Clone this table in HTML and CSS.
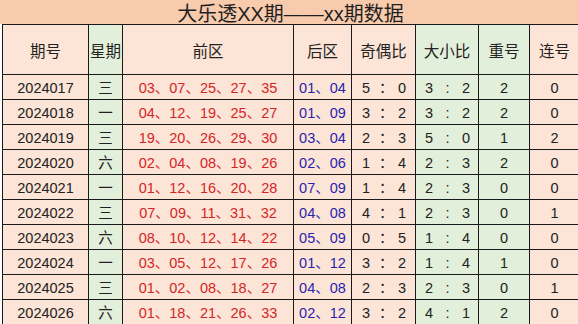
FILE: index.html
```html
<!DOCTYPE html>
<html lang="zh-CN">
<head>
<meta charset="utf-8">
<title>大乐透XX期——xx期数据</title>
<link rel="stylesheet" href="styles.css">
</head>
<body>
<div class="sheet">
  <div class="title">大乐透XX期——xx期数据</div>
  <table class="grid">
    <colgroup>
      <col class="c-issue"><col class="c-week"><col class="c-front"><col class="c-back">
      <col class="c-odd"><col class="c-big"><col class="c-rep"><col class="c-seq">
    </colgroup>
    <thead>
      <tr>
        <th class="peach">期号</th><th class="green">星期</th><th class="peach">前区</th><th class="peach">后区</th>
        <th class="peach">奇偶比</th><th class="green">大小比</th><th class="green">重号</th><th class="peach">连号</th>
      </tr>
    </thead>
    <tbody>
      <tr><td class="peach">2024017</td><td class="green">三</td><td class="peach front">03、07、25、27、35</td><td class="peach back">01、04</td><td class="peach"><div class="ratio odd"><span>5</span><span>：</span><span>0</span></div></td><td class="green"><div class="ratio big"><span>3</span><span>:</span><span>2</span></div></td><td class="green">2</td><td class="peach">0</td></tr>
      <tr><td class="peach">2024018</td><td class="green">一</td><td class="peach front">04、12、19、25、27</td><td class="peach back">01、09</td><td class="peach"><div class="ratio odd"><span>3</span><span>：</span><span>2</span></div></td><td class="green"><div class="ratio big"><span>3</span><span>:</span><span>2</span></div></td><td class="green">2</td><td class="peach">0</td></tr>
      <tr><td class="peach">2024019</td><td class="green">三</td><td class="peach front">19、20、26、29、30</td><td class="peach back">03、04</td><td class="peach"><div class="ratio odd"><span>2</span><span>：</span><span>3</span></div></td><td class="green"><div class="ratio big"><span>5</span><span>:</span><span>0</span></div></td><td class="green">1</td><td class="peach">2</td></tr>
      <tr><td class="peach">2024020</td><td class="green">六</td><td class="peach front">02、04、08、19、26</td><td class="peach back">02、06</td><td class="peach"><div class="ratio odd"><span>1</span><span>：</span><span>4</span></div></td><td class="green"><div class="ratio big"><span>2</span><span>:</span><span>3</span></div></td><td class="green">2</td><td class="peach">0</td></tr>
      <tr><td class="peach">2024021</td><td class="green">一</td><td class="peach front">01、12、16、20、28</td><td class="peach back">07、09</td><td class="peach"><div class="ratio odd"><span>1</span><span>：</span><span>4</span></div></td><td class="green"><div class="ratio big"><span>2</span><span>:</span><span>3</span></div></td><td class="green">0</td><td class="peach">0</td></tr>
      <tr><td class="peach">2024022</td><td class="green">三</td><td class="peach front">07、09、11、31、32</td><td class="peach back">04、08</td><td class="peach"><div class="ratio odd"><span>4</span><span>：</span><span>1</span></div></td><td class="green"><div class="ratio big"><span>2</span><span>:</span><span>3</span></div></td><td class="green">0</td><td class="peach">1</td></tr>
      <tr><td class="peach">2024023</td><td class="green">六</td><td class="peach front">08、10、12、14、22</td><td class="peach back">05、09</td><td class="peach"><div class="ratio odd"><span>0</span><span>：</span><span>5</span></div></td><td class="green"><div class="ratio big"><span>1</span><span>:</span><span>4</span></div></td><td class="green">0</td><td class="peach">0</td></tr>
      <tr><td class="peach">2024024</td><td class="green">一</td><td class="peach front">03、05、12、17、26</td><td class="peach back">01、12</td><td class="peach"><div class="ratio odd"><span>3</span><span>：</span><span>2</span></div></td><td class="green"><div class="ratio big"><span>1</span><span>:</span><span>4</span></div></td><td class="green">1</td><td class="peach">0</td></tr>
      <tr><td class="peach">2024025</td><td class="green">三</td><td class="peach front">01、02、08、18、27</td><td class="peach back">04、08</td><td class="peach"><div class="ratio odd"><span>2</span><span>：</span><span>3</span></div></td><td class="green"><div class="ratio big"><span>2</span><span>:</span><span>3</span></div></td><td class="green">0</td><td class="peach">1</td></tr>
      <tr><td class="peach">2024026</td><td class="green">六</td><td class="peach front">01、18、21、26、33</td><td class="peach back">02、12</td><td class="peach"><div class="ratio odd"><span>3</span><span>：</span><span>2</span></div></td><td class="green"><div class="ratio big"><span>4</span><span>:</span><span>1</span></div></td><td class="green">2</td><td class="peach">0</td></tr>
    </tbody>
  </table>
</div>
</body>
</html>
```

FILE: styles.css
```css
html, body {
  margin: 0;
  padding: 0;
  background: #ffffff;
  overflow: hidden;
}

body {
  font-family: "Liberation Sans", "Noto Sans CJK SC", sans-serif;
  color: #222222;
}

.sheet {
  width: 580px;
  padding-left: 2px;
}

.title {
  box-sizing: border-box;
  height: 24px;
  width: 579px;
  margin-left: -2px;
  padding-top: 3px;
  padding-left: 2px;
  background: #f8cbad;
  font-family: "Liberation Sans", "Noto Sans CJK SC", sans-serif;
  font-size: 20px;
  line-height: 22px;
  text-align: center;
  color: #1f1f1f;
  white-space: nowrap;
}

.grid {
  border-collapse: collapse;
  table-layout: fixed;
  width: 577px;
}

.c-issue { width: 86px; }
.c-week { width: 34px; }
.c-front { width: 171px; }
.c-back { width: 58px; }
.c-odd { width: 64px; }
.c-big { width: 63px; }
.c-rep { width: 51px; }
.c-seq { width: 50px; }

.grid th,
.grid td {
  border: 1px solid #1a1a1a;
  padding: 0;
  text-align: center;
  white-space: nowrap;
}

.grid th {
  height: 49px;
  font-size: 15.5px;
  font-weight: normal;
  color: #222222;
  font-family: "Noto Sans CJK SC", sans-serif;
}

.grid td {
  font-size: 14.5px;
  line-height: 22px;
  padding-top: 2px;
}

.peach { background: #fce4d6; }
.green { background: #e2efda; }

.front { color: #d42626; }
.back { color: #2a1fae; }

.ratio {
  display: flex;
  justify-content: space-between;
  align-items: center;
  height: 22px;
}

.ratio.odd { padding: 0 9px 0 10px; }
.ratio.odd span:nth-child(2) { width: 10px; text-align: left; }
.ratio.big { padding: 0 8px 0 9px; }
```
